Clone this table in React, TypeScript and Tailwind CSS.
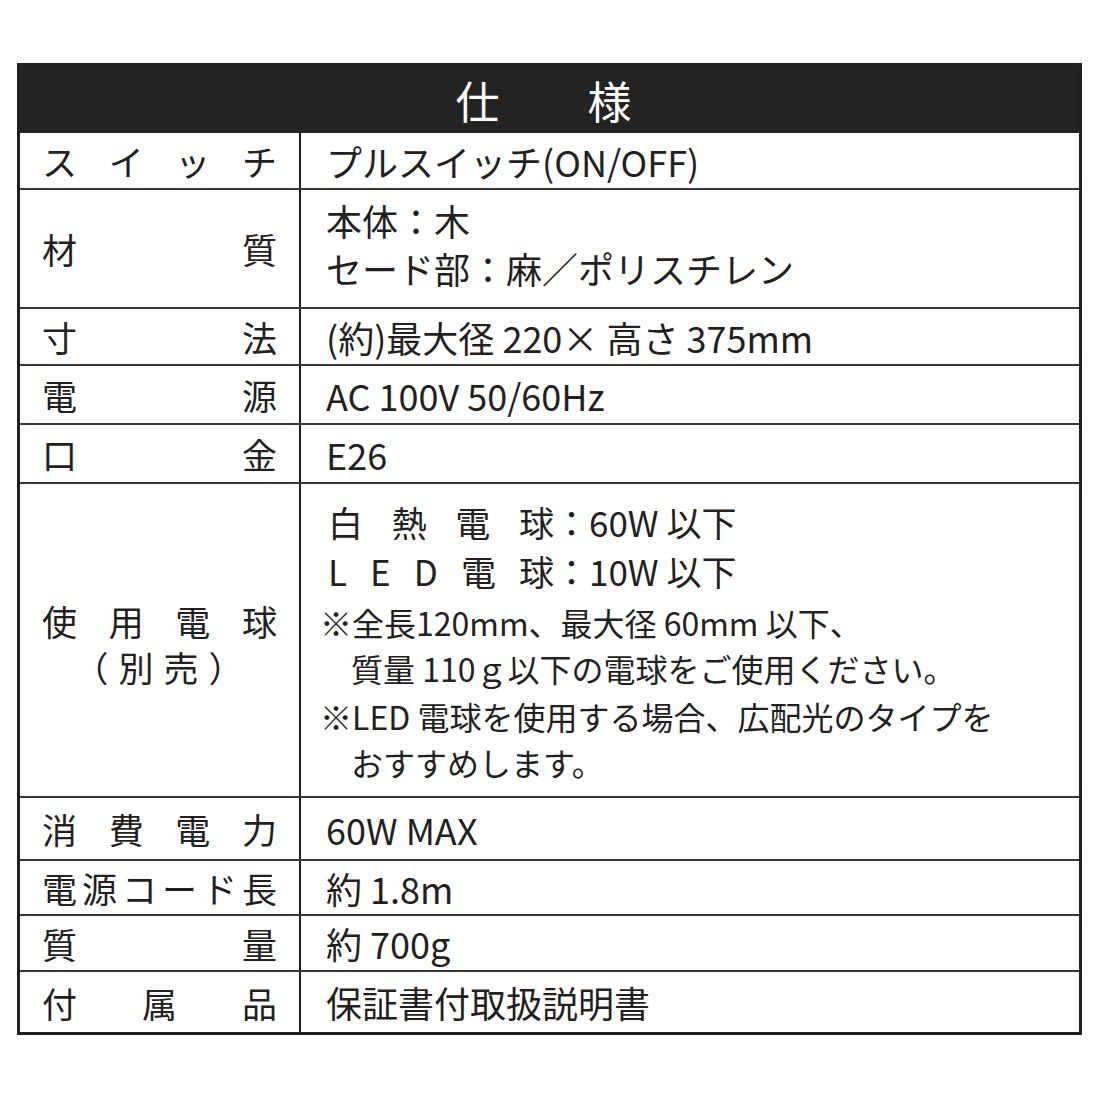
const font = { fontFamily: '"Noto Sans CJK JP", "Noto Sans", sans-serif' };

function Spread({ chars, className = '' }: { chars: string[]; className?: string }) {
	return (
		<div className={`flex justify-between ${className}`}>
			{chars.map((c, i) => (
				<span key={i}>{c}</span>
			))}
		</div>
	);
}

type Row = { label: string[]; h: string; value: React.ReactNode; last?: boolean };

// heights include the 2px bottom rule (border-box)
const rows: Row[] = [
	{ label: ['ス', 'イ', 'ッ', 'チ'], h: 'h-[57px]', value: 'プルスイッチ(ON/OFF)' },
	{
		label: ['材', '質'],
		h: 'h-[119px]',
		value: (
			<div className="leading-[48px] mb-[10px]">
				<div>本体：木</div>
				<div>セード部：麻／ポリスチレン</div>
			</div>
		),
	},
	{ label: ['寸', '法'], h: 'h-[57px]', value: '(約)最大径 220× 高さ 375mm' },
	{ label: ['電', '源'], h: 'h-[59px]', value: 'AC 100V 50/60Hz' },
	{ label: ['口', '金'], h: 'h-[59px]', value: 'E26' },
	{ label: [], h: 'h-[314px]', value: null },
	{ label: ['消', '費', '電', '力'], h: 'h-[63px]', value: '60W MAX' },
	{ label: ['電', '源', 'コ', 'ー', 'ド', '長'], h: 'h-[55px]', value: '約 1.8m' },
	{ label: ['質', '量'], h: 'h-[56px]', value: '約 700g' },
	{ label: ['付', '属', '品'], h: 'h-[60px]', value: '保証書付取扱説明書', last: true },
];

function BulbRow() {
	return (
		<div className="flex h-[314px] border-b-2 border-[#3a3637]">
			<div className="w-[281px] shrink-0 flex flex-col justify-center px-[22px] border-r-2 border-[#231f20] text-[35px] leading-[46px] pt-[8px]">
				<Spread chars={['使', '用', '電', '球']} />
				<div className="flex justify-center gap-[10px] pr-[2px]">
					<span>（</span>
					<span>別</span>
					<span>売</span>
					<span>）</span>
				</div>
			</div>
			<div className="flex-1 pt-[13px]">
				<div className="pl-[27px] text-[35px] leading-[49px]">
					<div className="flex">
						<Spread chars={['白', '熱', '電', '球']} className="w-[226px]" />
						<span>：60W 以下</span>
					</div>
					<div className="flex">
						<Spread chars={['L', 'E', 'D', '電', '球']} className="w-[226px]" />
						<span>：10W 以下</span>
					</div>
				</div>
				<div className="pl-[19px] text-[32px] leading-[46px] mt-[4px]">
					<div>※全長120mm、最大径 60mm 以下、</div>
					<div className="pl-[31px]">質量 110ｇ以下の電球をご使用ください。</div>
					<div className="mt-[2px]">※LED 電球を使用する場合、広配光のタイプを</div>
					<div className="pl-[31px]">おすすめします。</div>
				</div>
			</div>
		</div>
	);
}

export default function App() {
	return (
		<div className="w-[1100px] h-[1100px] bg-white text-[#231f20] pt-[63px] pl-[17px]" style={font}>
			<div className="w-[1065px] border-[3px] border-[#231f20]">
				{/* header */}
				<div className="h-[67px] bg-[#232323] flex items-center justify-center pr-[12px] text-white text-[44px] leading-none">
					仕　　様
				</div>

				{rows.map((r, idx) =>
					r.value === null ? (
						<BulbRow key={idx} />
					) : (
						<div key={idx} className={`flex ${r.h} ${r.last ? '' : 'border-b-2 border-[#3a3637]'}`}>
							<div className="w-[281px] shrink-0 flex flex-col justify-center px-[22px] border-r-2 border-[#231f20] text-[35px] leading-none">
								<Spread chars={r.label} />
							</div>
							<div className="flex-1 flex items-center pl-[25px] text-[36px] leading-none">{r.value}</div>
						</div>
					)
				)}
			</div>
		</div>
	);
}
